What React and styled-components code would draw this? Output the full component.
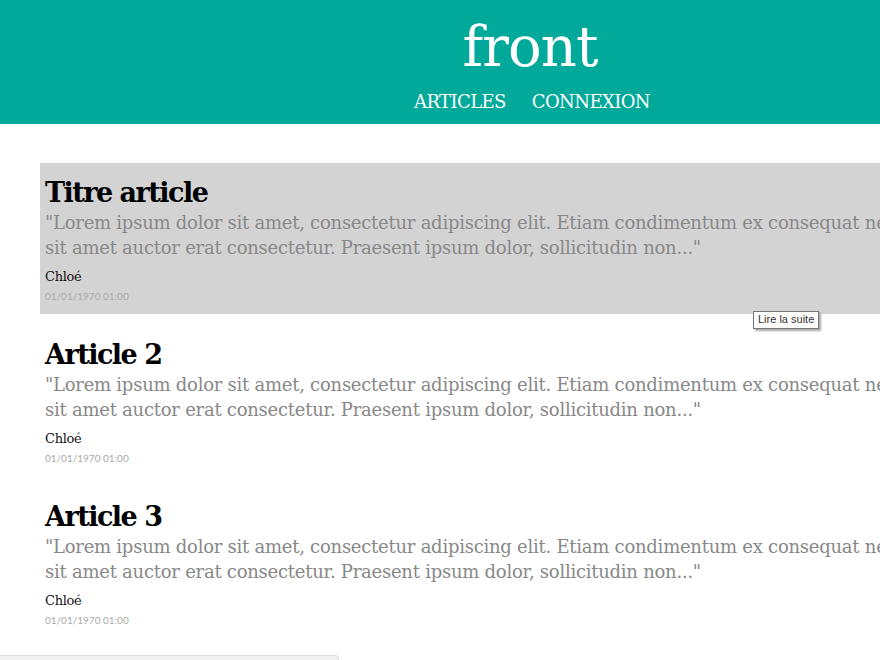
import React from "react";
import styled, { createGlobalStyle } from "styled-components";

const GlobalStyle = createGlobalStyle`
  html, body {
    margin: 0;
    padding: 0;
    overflow: hidden;
    background: #fff;
  }
  body {
    font-family: "DejaVu Serif", "Liberation Serif", serif;
  }
  #root {
    width: 880px;
    height: 660px;
    overflow: hidden;
  }
`;

const articles = [
  { id: 1, title: "Titre article", active: true },
  { id: 2, title: "Article 2" },
  { id: 3, title: "Article 3" },
];

export default function App() {
  return (
    <Page>
      <GlobalStyle />
      <Header>
        <Brand>front</Brand>
        <Nav>
          <NavLink>ARTICLES</NavLink>
          <NavLink>CONNEXION</NavLink>
        </Nav>
      </Header>
      <List>
        {articles.map((a) => (
          <Article key={a.id} $active={a.active}>
            <Title>{a.title}</Title>
            <Excerpt>
              "Lorem ipsum dolor sit amet, consectetur adipiscing elit. Etiam condimentum ex consequat nec
              <br />
              sit amet auctor erat consectetur. Praesent ipsum dolor, sollicitudin non..."
            </Excerpt>
            <Author>Chloé</Author>
            <Date>01/01/1970 01:00</Date>
            {a.active && <Tooltip>Lire la suite</Tooltip>}
          </Article>
        ))}
      </List>
      <Footer />
    </Page>
  );
}

const Page = styled.div`
  width: 1060px;
  height: 660px;
  position: relative;
  overflow: hidden;
`;

const Header = styled.header`
  background: #00a99a;
  height: 124px;
  display: flex;
  flex-direction: column;
  align-items: center;
  color: #fff;
`;

const Brand = styled.h1`
  margin: 14px 0 0;
  font-family: "DejaVu Serif", serif;
  font-weight: 300;
  font-size: 56px;
  line-height: 66px;
  letter-spacing: -1px;
`;

const Nav = styled.nav`
  display: flex;
  gap: 26px;
  margin-top: 10px;
  margin-left: 4px;
`;

const NavLink = styled.a`
  font-family: "DejaVu Serif", serif;
  font-size: 18px;
  line-height: 24px;
  letter-spacing: -0.6px;
  color: #fff;
`;

const List = styled.main`
  padding: 39px 0 0 40px;
  display: flex;
  flex-direction: column;
  gap: 11px;
`;

const Article = styled.article`
  position: relative;
  height: 151px;
  padding: 13px 0 0 5px;
  box-sizing: border-box;
  background: ${(p) => (p.$active ? "#d3d3d3" : "transparent")};
`;

const Title = styled.h2`
  margin: 0;
  font-family: "DejaVu Serif", serif;
  font-weight: bold;
  font-size: 27px;
  line-height: 34px;
  letter-spacing: -1.5px;
  color: #000;
`;

const Excerpt = styled.p`
  margin: 0;
  font-family: "DejaVu Serif", serif;
  font-weight: 300;
  font-size: 18px;
  line-height: 25px;
  letter-spacing: -0.25px;
  color: #888;
  white-space: nowrap;
`;

const Author = styled.div`
  margin-top: 8px;
  font-family: "DejaVu Serif", serif;
  font-size: 13px;
  line-height: 18px;
  letter-spacing: -0.3px;
  color: #111;
`;

const Date = styled.div`
  margin-top: 3px;
  font-family: Lato, sans-serif;
  font-size: 10px;
  line-height: 14px;
  color: #aaa;
`;

const Tooltip = styled.span`
  position: absolute;
  left: 713px;
  top: 148px;
  padding: 1px 4px 2px;
  background: #fff;
  border: 1px solid #767676;
  box-shadow: 2px 2px 2px rgba(0, 0, 0, 0.35);
  font-family: "Liberation Sans", sans-serif;
  font-size: 11px;
  line-height: 13px;
  color: #333;
  white-space: nowrap;
`;

const Footer = styled.div`
  position: absolute;
  left: 0;
  top: 655px;
  width: 338px;
  height: 20px;
  background: #f0f0f0;
  border-top: 1px solid #ddd;
  border-right: 1px solid #ddd;
  border-top-right-radius: 4px;
`;
